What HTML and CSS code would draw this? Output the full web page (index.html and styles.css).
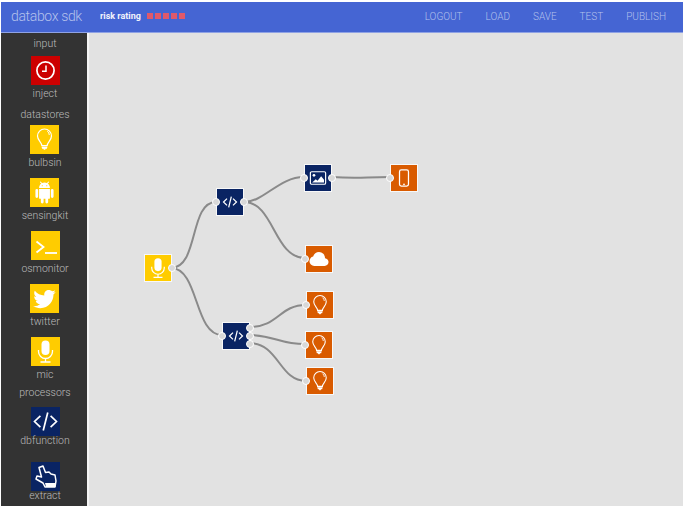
FILE: index.html
```html
<!DOCTYPE html>
<html lang="en">
<head>
<meta charset="utf-8">
<title>databox sdk</title>
<link rel="stylesheet" href="styles.css">
</head>
<body>
<svg class="defs" width="0" height="0" aria-hidden="true">
  <symbol id="i-clock" viewBox="0 0 29 29"><circle cx="14.5" cy="14.5" r="8.6" fill="none" stroke="#fff" stroke-width="1.7"/><path d="M15 9.5v5.8h-4" fill="none" stroke="#fff" stroke-width="1.5"/></symbol>
  <symbol id="i-bulb" viewBox="0 0 29 29"><path d="M11.8 20.500c0-3-4.300-5.200-4.300-9.500a7 7 0 0 1 14 0c0 4.300-4.300 6.500-4.300 9.500z" fill="none" stroke="#fff" stroke-width="1.200"/><path d="M17.300 6.300a4.500 4.500 0 0 1 2 3.700" fill="none" stroke="#fff" stroke-width="1"/><path d="M11.500 21.500h6l-.6 2.200h-1.200l-.6 1h-1.200l-.6-1h-1.200z" fill="#fff"/></symbol>
  <symbol id="i-android" viewBox="-4 -4 32 32"><path fill="#fff" d="M15,5H14V4H15M10,5H9V4H10M15.53,2.16L16.84,.85C17.03,.66 17.03,.34 16.84,.14C16.64,-.05 16.32,-.05 16.13,.14L14.65,1.62C13.85,1.23 12.95,1 12,1C11.04,1 10.14,1.23 9.34,1.63L7.85,.14C7.66,-.05 7.34,-.05 7.15,.14C6.95,.34 6.95,.66 7.15,.85L8.46,2.16C6.97,3.26 6,5 6,7H18C18,5 17,3.25 15.53,2.16M20.5,8A1.5,1.5 0 0,0 19,9.5V16.5A1.5,1.5 0 0,0 20.5,18A1.5,1.5 0 0,0 22,16.5V9.5A1.5,1.5 0 0,0 20.5,8M3.5,8A1.5,1.5 0 0,0 2,9.5V16.5A1.5,1.5 0 0,0 3.5,18A1.5,1.5 0 0,0 5,16.5V9.5A1.5,1.5 0 0,0 3.5,8M6,18A1,1 0 0,0 7,19H8V22.500A1.5,1.5 0 0,0 9.5,24A1.5,1.5 0 0,0 11,22.500V19H13V22.500A1.5,1.5 0 0,0 14.5,24A1.5,1.5 0 0,0 16,22.500V19H17A1,1 0 0,0 18,18V8H6V18Z"/></symbol>
  <symbol id="i-term" viewBox="0 0 29 29"><path d="M5.500 10.500l7 5.500-7 5.500" fill="none" stroke="#fff" stroke-width="1.800"/><path d="M14 22h12" fill="none" stroke="#fff" stroke-width="1.800"/></symbol>
  <symbol id="i-twitter" viewBox="-1.500 -1.500 27 27"><path fill="#fff" d="M22.46 6c-.77.35-1.6.58-2.46.69.88-.53 1.56-1.37 1.88-2.38-.83.5-1.75.85-2.72 1.05C18.37 4.5 17.26 4 16 4c-2.35 0-4.27 1.92-4.27 4.29 0 .34.04.67.11.98C8.28 9.09 5.11 7.38 3 4.79c-.37.63-.58 1.37-.58 2.15 0 1.49.75 2.81 1.91 3.56-.71 0-1.37-.2-1.95-.5v.03c0 2.08 1.48 3.82 3.44 4.21a4.22 4.22 0 0 1-1.93.07 4.28 4.28 0 0 0 4 2.98 8.521 8.521 0 0 1-5.33 1.84c-.34 0-.68-.02-1.02-.06C3.44 20.29 5.7 21 8.12 21 16 21 20.33 14.46 20.33 8.79c0-.19 0-.37-.01-.56.84-.6 1.56-1.36 2.14-2.23z"/></symbol>
  <symbol id="i-mic" viewBox="0 0 29 29"><rect x="10.500" y="3.500" width="8" height="14.500" rx="4" fill="#fff"/><path d="M7.500 13v1.500a7 7 0 0 0 14 0V13M14.500 21.500v3M9.500 25h10" fill="none" stroke="#fff" stroke-width="1.300"/></symbol>
  <symbol id="i-code" viewBox="1.700 1.700 25.600 25.600"><path d="M10 9.500L4.800 14.500l5.200 5M19 9.500l5.200 5-5.200 5M16.500 6.500l-4 16" fill="none" stroke="#fff" stroke-width="1.500"/></symbol>
  <symbol id="i-code-small" viewBox="-5 -5 39 39"><path d="M10 9.500L4.800 14.500l5.200 5M19 9.500l5.200 5-5.200 5M16.500 6.500l-4 16" fill="none" stroke="#fff" stroke-width="1.900"/></symbol>
  <symbol id="i-hand" viewBox="0 0 29 29"><path d="M8 5.500l4-1.500 2.500 6.500 3.500-.5 2 2 4 1 1 6-1 6H14l-2-4-7-4 1-3 4.500 1z" fill="none" stroke="#fff" stroke-width="1.500" stroke-linejoin="round"/><path d="M14 21h10.500v4H15z" fill="#fff"/></symbol>
  <symbol id="i-image" viewBox="0 0 29 29"><rect x="6" y="7.500" width="17" height="14" rx="1.500" fill="none" stroke="#fff" stroke-width="1.300"/><circle cx="10" cy="11.500" r="1.500" fill="#fff"/><path d="M8 19.500l4-3.500 2 1.500 4-5 3.200 4v3z" fill="#fff"/></symbol>
  <symbol id="i-phone" viewBox="0 0 29 29"><rect x="9.500" y="5.500" width="10" height="18" rx="2" fill="none" stroke="#fff" stroke-width="1.400"/><circle cx="14.500" cy="21.500" r="1" fill="#fff"/></symbol>
  <symbol id="i-cloud" viewBox="-3 -3 30 30"><path fill="#fff" d="M6.500 20Q4.220 20 2.610 18.430 1 16.850 1 14.580 1 12.630 2.170 11.100 3.350 9.570 5.250 9.150 5.880 6.850 7.750 5.430 9.630 4 12 4 14.930 4 16.960 6.040 19 8.070 19 11 20.730 11.200 21.860 12.500 23 13.780 23 15.500 23 17.380 21.690 18.690 20.380 20 18.500 20Z"/></symbol>
</svg>

<div class="app">
  <header class="topbar">
    <div class="brand">databox sdk</div>
    <div class="risk">
      <span class="risk-label">risk rating</span>
      <span class="risk-dots"><i></i><i></i><i></i><i></i><i></i></span>
    </div>
    <nav class="menu">
      <a>LOGOUT</a><a>LOAD</a><a>SAVE</a><a>TEST</a><a>PUBLISH</a>
    </nav>
  </header>
  <div class="main">
    <aside class="palette">
      <div class="heading">input</div>
      <div class="tool tool-first"><span class="tile red"><svg><use href="#i-clock"/></svg></span><span class="label">inject</span></div>
      <div class="heading heading-next">datastores</div>
      <div class="tool tool-tight"><span class="tile yellow"><svg><use href="#i-bulb"/></svg></span><span class="label">bulbsin</span></div>
      <div class="tool"><span class="tile yellow"><svg><use href="#i-android"/></svg></span><span class="label">sensingkit</span></div>
      <div class="tool"><span class="tile yellow"><svg><use href="#i-term"/></svg></span><span class="label">osmonitor</span></div>
      <div class="tool"><span class="tile yellow"><svg><use href="#i-twitter"/></svg></span><span class="label">twitter</span></div>
      <div class="tool"><span class="tile yellow"><svg><use href="#i-mic"/></svg></span><span class="label">mic</span></div>
      <div class="heading heading-near">processors</div>
      <div class="tool tool-proc"><span class="tile navy"><svg><use href="#i-code"/></svg></span><span class="label tighter">dbfunction</span></div>
      <div class="tool tool-far"><span class="tile navy"><svg><use href="#i-hand"/></svg></span><span class="label tighter">extract</span></div>
    </aside>
    <main class="canvas">
      <svg class="wires" width="595" height="473">
        <path d="M82 235C110 235 100 169 127 169"/>
        <path d="M82 235C110 235 105 302 133 302"/>
        <path d="M155 169C175 169 190 144 215 144"/>
        <path d="M155 169C185 169 185 225 216 225"/>
        <path d="M243 144C270 146 275 144 301 144"/>
        <path d="M160 294C190 294 190 272 217 272"/>
        <path d="M160 302C185 302 190 311 216 311"/>
        <path d="M160 310C190 310 190 348 217 348"/>
      </svg>
      <div class="node yellow n-mic"><svg><use href="#i-mic"/></svg><b class="port right"></b></div>
      <div class="node navy n-db1"><svg><use href="#i-code-small"/></svg><b class="port left"></b><b class="port right"></b></div>
      <div class="node navy n-img"><svg><use href="#i-image"/></svg><b class="port left"></b><b class="port right"></b></div>
      <div class="node orange n-phone"><svg><use href="#i-phone"/></svg><b class="port left"></b></div>
      <div class="node orange n-cloud"><svg><use href="#i-cloud"/></svg><b class="port left"></b></div>
      <div class="node navy n-db2"><svg><use href="#i-code-small"/></svg><b class="port left"></b><b class="port right up"></b><b class="port right"></b><b class="port right down"></b></div>
      <div class="node orange n-b1"><svg><use href="#i-bulb"/></svg><b class="port left"></b></div>
      <div class="node orange n-b2"><svg><use href="#i-bulb"/></svg><b class="port left"></b></div>
      <div class="node orange n-b3"><svg><use href="#i-bulb"/></svg><b class="port left"></b></div>
    </main>
  </div>
</div>
</body>
</html>
```
FILE: styles.css
```css
* { box-sizing: border-box; }
html, body { margin: 0; height: 100%; background: #fff; overflow: hidden; }
body { font-family: Roboto, "Liberation Sans", sans-serif; }
.defs { position: absolute; }

.app { width: 682px; height: 504px; margin: 2px 0 0 1px; display: flex; flex-direction: column; }

.topbar { flex: none; height: 31px; background: #4565d3; display: flex; align-items: center; padding: 0 17px 2px 10px; border-bottom: 1px solid #8fa2e4; }
.brand { font-size: 14px; letter-spacing: -.35px; font-weight: 300; color: #b4c1ec; width: 89px; white-space: nowrap; }
.risk { display: flex; align-items: center; gap: 6px; }
.risk-label { font-size: 9px; font-weight: 700; color: #f1f3fb; }
.risk-dots { display: flex; gap: 2px; }
.risk-dots i { width: 6px; height: 6px; background: #e0596b; }
.menu { margin-left: auto; display: flex; gap: 23px; }
.menu a { font-size: 10px; font-weight: 300; color: #b4c1ec; }

.main { flex: 1; display: flex; min-height: 0; }

.palette { flex: none; width: 86px; background: #333; display: flex; flex-direction: column; align-items: center; padding: 4px 0 0 2px; }
.heading, .label { display: block; height: 14px; line-height: 14px; font-size: 10.5px; font-weight: 300; color: #bbb; text-align: center; white-space: nowrap; }
.heading-next { margin-top: 7px; }
.heading-near { margin-top: 4px; }
.tool { display: flex; flex-direction: column; align-items: center; margin-top: 8px; }
.tool-first { margin-top: 5px; }
.tool-tight { margin-top: 3px; }
.tool-proc { margin-top: 7px; }
.tool-far { margin-top: 14px; }
.label { margin-top: 2px; }
.tighter { margin-top: -2px; }

.tile { display: block; width: 29px; height: 29px; }
.tile svg { display: block; width: 29px; height: 29px; }
.red { background: #cc0000; }
.yellow { background: #ffcc00; }
.navy { background: #0a2463; }
.orange { background: #d95b00; }

.canvas { flex: 1; position: relative; background: #e2e2e2; border-left: 2px solid #f4f4f4; overflow: hidden; }
.wires { position: absolute; left: 0; top: 0; }
.wires path { fill: none; stroke: #8a8a8a; stroke-width: 2; }

.node { position: absolute; width: 28px; height: 28px; border: 1px solid #f8f8f8; }
.node svg { display: block; width: 26px; height: 26px; }
.port { position: absolute; top: 9px; width: 8px; height: 8px; border-radius: 50%; background: #d8d8d8; border: 1px solid #fff; }
.port.left { left: -5px; }
.port.right { right: -5px; }
.port.up { top: 1px; }
.port.down { top: 17px; }

.n-mic { left: 55px; top: 221px; }
.n-db1 { left: 127px; top: 155px; }
.n-img { left: 215px; top: 131px; }
.n-phone { left: 301px; top: 131px; }
.n-cloud { left: 216px; top: 212px; }
.n-db2 { left: 133px; top: 289px; }
.n-b1 { left: 217px; top: 258px; }
.n-b2 { left: 216px; top: 298px; }
.n-b3 { left: 217px; top: 334px; }
```
